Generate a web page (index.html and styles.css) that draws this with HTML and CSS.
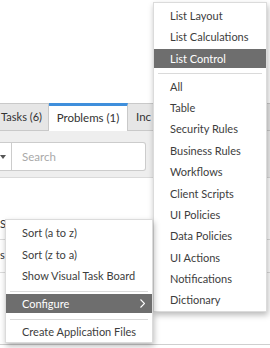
FILE: index.html
```html
<!DOCTYPE html>
<html>
<head>
<meta charset="utf-8">
<link rel="stylesheet" href="styles.css">
</head>
<body>
<div class="page">
  <div class="top-space"></div>
  <div class="tabs">
    <div class="tab t1">Tasks (6)</div>
    <div class="tab active">Problems (1)</div>
    <div class="tab t3">Inc</div>
  </div>
  <div class="toolbar">
    <div class="select">
      <svg width="6" height="4" viewBox="0 0 6 4"><polygon points="0,0 6,0 3,4" fill="#555"/></svg>
    </div>
    <div class="search">Search</div>
  </div>
  <div class="list">
    <div class="row first"><span class="cell">S</span></div>
    <div class="row"><span class="cell">s</span></div>
  </div>
  <div class="footer"></div>

  <div class="menu menu-right">
    <div class="item">List Layout</div>
    <div class="item">List Calculations</div>
    <div class="item hl">List Control</div>
    <div class="sep"></div>
    <div class="item">All</div>
    <div class="item">Table</div>
    <div class="item">Security Rules</div>
    <div class="item">Business Rules</div>
    <div class="item">Workflows</div>
    <div class="item">Client Scripts</div>
    <div class="item">UI Policies</div>
    <div class="item">Data Policies</div>
    <div class="item">UI Actions</div>
    <div class="item">Notifications</div>
    <div class="item">Dictionary</div>
  </div>

  <div class="menu menu-left">
    <div class="item">Sort (a to z)</div>
    <div class="item">Sort (z to a)</div>
    <div class="item">Show Visual Task Board</div>
    <div class="sep"></div>
    <div class="item hl sub">Configure
      <svg class="chev" width="5" height="9" viewBox="0 0 5 9"><polyline points="0.5,0.5 4.5,4.5 0.5,8.5" fill="none" stroke="#fff" stroke-width="1.1"/></svg>
    </div>
    <div class="sep"></div>
    <div class="item">Create Application Files</div>
  </div>
</div>
</body>
</html>
```

FILE: styles.css
```css
html, body {
  margin: 0;
  padding: 0;
  background: #fff;
}
body {
  font-family: Lato, "Open Sans", sans-serif;
  font-size: 11px;
  color: #333;
}
.page {
  position: relative;
  width: 270px;
  height: 348px;
  overflow: hidden;
  display: flex;
  flex-direction: column;
}
.top-space {
  height: 103px;
  flex: none;
}
.tabs {
  display: flex;
  height: 28px;
  margin-left: -10px;
  flex: none;
  background: #e6e6e6;
}
.tab {
  flex: none;
  box-sizing: border-box;
  height: 28px;
  background: #e6e6e6;
  border: 1px solid #c9c9c9;
  border-left: none;
  line-height: 26px;
  white-space: nowrap;
  color: #333;
  font-size: 11.5px;
  overflow: hidden;
}
.tab.t1 {
  width: 59px;
  text-align: right;
  padding-right: 6px;
  font-size: 11px;
}
.tab.active {
  width: 79px;
  background: #fff;
  border-top: 3px solid #3f8fdc;
  border-bottom: none;
  line-height: 24px;
  text-align: center;
}
.tab.t3 {
  flex: 1;
  padding-left: 8px;
  border-right: none;
}
.toolbar {
  flex: none;
  height: 47px;
  box-sizing: border-box;
  background: #eeeeee;
  border-bottom: 1px solid #dadada;
  padding-top: 11px;
  display: flex;
  align-items: flex-start;
}
.select {
  flex: none;
  box-sizing: border-box;
  width: 21px;
  height: 29px;
  margin-left: -9px;
  background: #fff;
  border: 1px solid #cccccc;
  display: flex;
  align-items: center;
  padding-left: 8px;
}
.search {
  flex: none;
  box-sizing: border-box;
  width: 134px;
  height: 29px;
  background: #fff;
  border: 1px solid #cccccc;
  border-left: none;
  border-radius: 0 3px 3px 0;
  padding-left: 10px;
  line-height: 27px;
  color: #a9a9a9;
  font-size: 11.5px;
}
.list {
  flex: none;
  height: 166px;
  padding-top: 31px;
  box-sizing: border-box;
}
.row {
  height: 33px;
  box-sizing: border-box;
  border-bottom: 1px solid #dcdcdc;
  line-height: 30px;
}
.row.first {
  height: 31px;
}
.cell {
  padding-left: 0;
}
.footer {
  flex: none;
  border-top: 1px solid #cfcfcf;
  height: 4px;
}
.menu {
  position: absolute;
  background: #fff;
  border: 1px solid rgba(0,0,0,0.14);
  box-shadow: 1px 3px 6px rgba(0,0,0,0.28);
  box-sizing: border-box;
  padding: 2.3px 0 0;
}
.menu-right {
  left: 153px;
  top: 1.5px;
  width: 114px;
}
.menu-left {
  left: 5px;
  top: 219px;
  width: 148px;
}
.item {
  height: 19.4px;
  border-top: 1px solid transparent;
  border-bottom: 1px solid transparent;
  background-clip: padding-box;
  line-height: 19.4px;
  padding-left: 16px;
  white-space: nowrap;
  color: #3d3d3d;
}
.item.hl {
  background-color: #6e6e6e;
  color: #fff;
}
.item.sub {
  display: flex;
  align-items: center;
  justify-content: space-between;
  padding-right: 7px;
}
.chev {
  display: block;
}
.sep {
  height: 1px;
  background: #dadada;
  margin: 4.3px 4px 1.3px;
}
```
